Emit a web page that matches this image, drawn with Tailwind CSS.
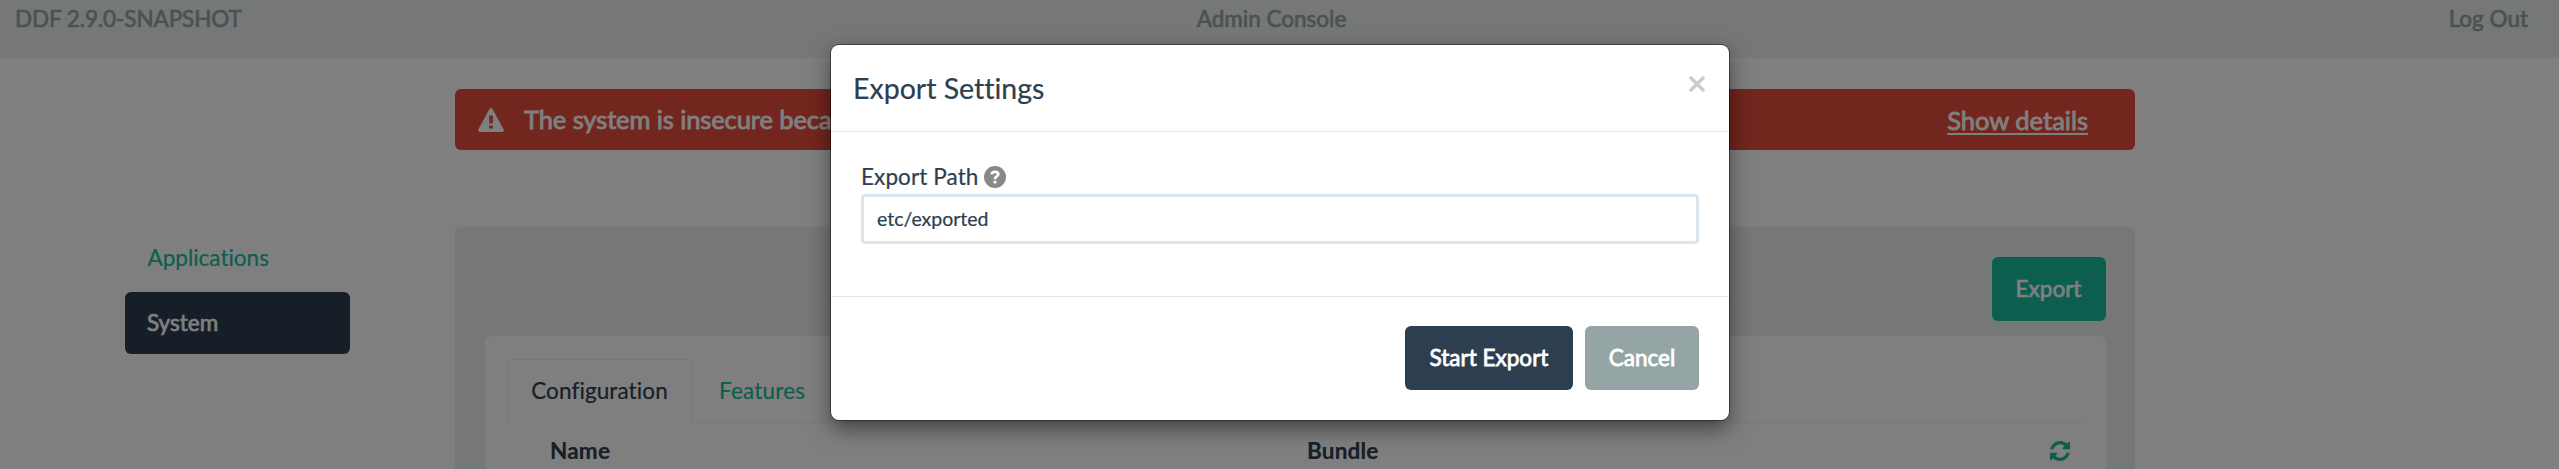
<!DOCTYPE html>
<html lang="en">
<head>
<meta charset="utf-8">
<title>Admin Console</title>
<script src="https://cdn.jsdelivr.net/npm/@tailwindcss/browser@4"></script>
</head>
<body class="relative h-[469px] overflow-hidden bg-white font-['Lato',sans-serif] text-[22.5px] leading-8 text-[#2c3e50] [font-variant-ligatures:none] [-webkit-text-stroke:0.2px]">
  <header class="grid h-[58px] grid-cols-3 bg-[#ecf0f1] pt-[3px] pr-[31px] pl-[15px] text-[#95a5a6] [-webkit-text-stroke:0.7px]">
    <div class="tracking-[-0.1px]">DDF 2.9.0-SNAPSHOT</div>
    <div class="text-center">Admin Console</div>
    <div class="text-right">Log Out</div>
  </header>
  <div class="flex h-[411px] overflow-hidden pt-[31px] pl-[125px]">
    <nav class="mt-[138px] w-[225px] shrink-0">
      <a class="flex h-[62px] items-center pl-[22.5px] text-[#18bc9c]">Applications</a>
      <a class="mt-[3px] flex h-[62px] items-center rounded-md bg-[#2c3e50] pl-[22px] text-white [-webkit-text-stroke:0.7px]">System</a>
    </nav>
    <main class="ml-[105px] w-[1680px] shrink-0">
      <div class="flex h-[61px] items-center rounded-md bg-[#e74c3c] pr-[47px] pl-[23px] text-[25.5px] text-white [-webkit-text-stroke:0.8px]">
        <svg class="h-[24px] w-[26px]" viewBox="0 0 26 24" stroke="none"><path fill="#fff" fill-rule="evenodd" d="M11.5 1Q13 -1 14.5 1L25.600 21.200Q26.500 23.800 24 24H2Q-.5 23.800.4 21.200ZM11 7.500L11.400 15.500H14.600L15 7.500ZM11.200 17.500V20.500H14.800V17.500Z"/></svg>
        <span class="mb-[2px] ml-[20px] tracking-[-0.1px]">The system is insecure because</span>
        <a class="ml-auto underline decoration-2 underline-offset-3">Show details</a>
      </div>
      <section class="mt-[77px] h-[400px] rounded-md bg-[#ecf0f1] pt-[30px] pr-[29px] pl-[30px]">
        <div class="flex justify-end"><button class="h-16 w-[114px] rounded-md bg-[#18bc9c] pr-px text-white [-webkit-text-stroke:0.7px]">Export</button></div>
        <div class="mt-[15px] h-[300px] rounded-md bg-white px-[23px] pt-[23px]">
          <div class="flex h-16 border-b border-[#ecf0f1]">
            <div class="flex h-16 w-[184px] items-center justify-center rounded-t-md border border-b-0 border-[#ecf0f1] bg-white pr-px pb-px tracking-[0.1px]">Configuration</div>
            <div class="flex items-center pl-[27px] tracking-[0.2px] text-[#18bc9c]">Features</div>
          </div>
          <div class="flex items-center pt-[12px] pl-[42px] font-bold tracking-[0.2px]">
            <div class="w-[757px]">Name</div>
            <div>Bundle</div>
            <svg class="mr-[13px] ml-auto size-5" viewBox="0 0 1536 1536" stroke="none"><path fill="#18bc9c" d="M1511 928q0 5-1 7-64 268-268 434.500T764 1536q-146 0-282.500-55T238 1324l-129 129q-19 19-45 19t-45-19-19-45V960q0-26 19-45t45-19h448q26 0 45 19t19 45-19 45l-137 137q71 66 161 102t187 36q134 0 250-65t186-179q11-17 53-117 8-23 30-23h192q13 0 22.500 9.500t9.500 22.500zm25-800v448q0 26-19 45t-45 19h-448q-26 0-45-19t-19-45 19-45l138-138Q969 256 768 256q-134 0-250 65T332 500q-11 17-53 117-8 23-30 23H50q-13 0-22.500-9.500T18 608v-7q65-268 270-434.500T768 0q146 0 284 55.500T1297 212l130-129q19-19 45-19t45 19 19 45z"/></svg>
          </div>
        </div>
      </section>
    </main>
  </div>
  <div class="absolute inset-0 bg-black/50"></div>
  <div role="dialog" class="absolute top-[45px] left-[831px] h-[375px] w-[898px] rounded-[8px] bg-white shadow-[0_0_0_1px_rgba(0,0,0,0.4),0_8px_22px_rgba(0,0,0,0.5)]">
    <div class="flex h-[87px] items-center justify-between border-b border-[#e5e5e5] pr-6 pl-[22px]">
      <h4 class="text-[28.5px]">Export Settings</h4>
      <svg class="mb-[9px] size-4" viewBox="0 0 16 16"><path d="M2 2L14 14M14 2L2 14" stroke="#ccc" stroke-width="3.600" stroke-linecap="round"/></svg>
    </div>
    <div class="h-[165px] border-b border-[#e5e5e5] px-[30px] pt-[28px]">
      <label class="flex h-[33px] items-center gap-[5px]"><span class="tracking-[0.1px]">Export Path</span>
        <svg class="size-[22px]" viewBox="0 0 22 22"><circle cx="11" cy="11" r="11" fill="#888"/><path d="M7.700 8.300Q8 5.800 11 5.800Q14.200 5.800 14.200 8.300Q14.200 9.800 12.300 10.800Q11 11.500 11 13.200" fill="none" stroke="#fff" stroke-width="2.800"/><path d="M9.600 14.800h2.800v2.600H9.600z" fill="#fff"/></svg>
      </label>
      <div class="mt-px flex h-[50px] items-center rounded-[4px] border-[3px] border-[#dce4ec] px-[13px] pb-px text-[19.500px]">etc/exported</div>
    </div>
    <div class="flex justify-end gap-3 px-[30px] pt-[29px] text-white [-webkit-text-stroke:0.8px]">
      <button class="h-16 w-[168px] rounded-md bg-[#2c3e50]">Start Export</button>
      <button class="h-16 w-[114px] rounded-md bg-[#95a5a6]">Cancel</button>
    </div>
  </div>
</body>
</html>
